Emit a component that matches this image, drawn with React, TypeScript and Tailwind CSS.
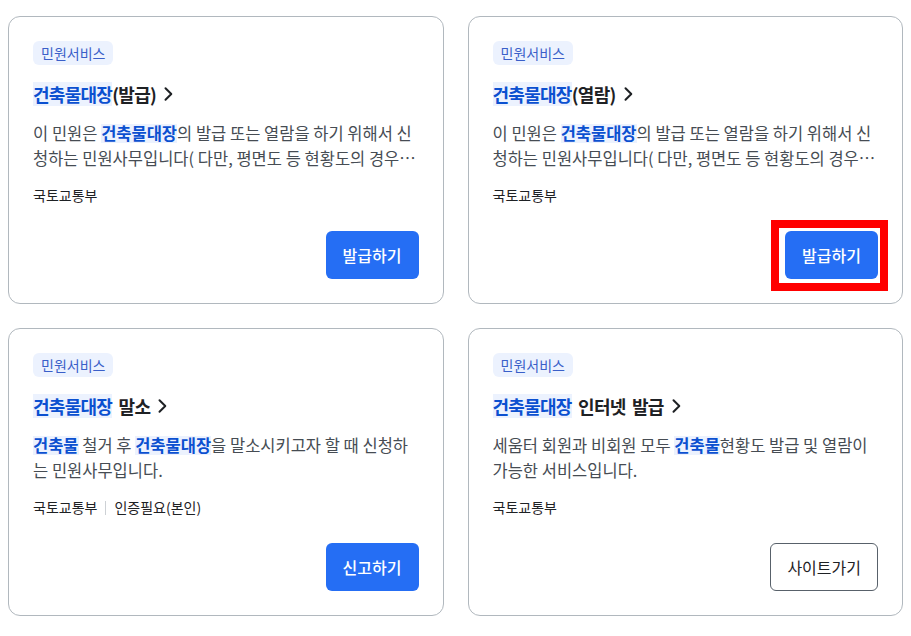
import React from 'react';

type Part = { text: string; hl?: boolean };

interface Service {
  titleHl: string;
  titleRest: string;
  desc: Part[];
  tags: string[];
  action: string;
  outline?: boolean;
  marked?: boolean;
}

const services: Service[] = [
  {
    titleHl: '건축물대장',
    titleRest: '(발급)',
    desc: [
      { text: '이 민원은 ' },
      { text: '건축물대장', hl: true },
      { text: '의 발급 또는 열람을 하기 위해서 신청하는 민원사무입니다( 다만, 평면도 등 현황도의 경우 건축물 소유자만 발급 가능합니다)' },
    ],
    tags: ['국토교통부'],
    action: '발급하기',
  },
  {
    titleHl: '건축물대장',
    titleRest: '(열람)',
    desc: [
      { text: '이 민원은 ' },
      { text: '건축물대장', hl: true },
      { text: '의 발급 또는 열람을 하기 위해서 신청하는 민원사무입니다( 다만, 평면도 등 현황도의 경우 건축물 소유자만 발급 가능합니다)' },
    ],
    tags: ['국토교통부'],
    action: '발급하기',
    marked: true,
  },
  {
    titleHl: '건축물대장',
    titleRest: ' 말소',
    desc: [
      { text: '건축물', hl: true },
      { text: ' 철거 후 ' },
      { text: '건축물대장', hl: true },
      { text: '을 말소시키고자 할 때 신청하는 민원사무입니다.' },
    ],
    tags: ['국토교통부', '인증필요(본인)'],
    action: '신고하기',
  },
  {
    titleHl: '건축물대장',
    titleRest: ' 인터넷 발급',
    desc: [
      { text: '세움터 회원과 비회원 모두 ' },
      { text: '건축물', hl: true },
      { text: '현황도 발급 및 열람이 가능한 서비스입니다.' },
    ],
    tags: ['국토교통부'],
    action: '사이트가기',
    outline: true,
  },
];

function ChevronRight() {
  return (
    <svg width="20" height="20" viewBox="0 0 20 20" fill="none" className="shrink-0">
      <path d="M7.5 4.2L13.3 10L7.5 15.8" stroke="#1e2124" strokeWidth="2" strokeLinecap="round" strokeLinejoin="round" />
    </svg>
  );
}

function ServiceCard({ item }: { item: Service }) {
  return (
    <div className="flex flex-col rounded-xl border border-[#b1b8be] bg-white px-6 pt-6 pb-6">
      <div className="flex">
        <span className="block h-6 rounded-md bg-[#ecf2fe] px-2 text-[14px] leading-6 text-[#3a5fc9]">
          민원서비스
        </span>
      </div>

      <div className="mt-4 flex h-[26px] items-center text-[18px] font-bold leading-[26px] tracking-[-0.04em] [word-spacing:3px] text-[#1e2124]">
        <span className="block h-6 bg-[#ecf2fe] leading-6 text-[#0b50d0]">{item.titleHl}</span>
        <span className="whitespace-pre">{item.titleRest}</span>
        <span className="ml-0.5">
          <ChevronRight />
        </span>
      </div>

      <p className="mt-[14px] line-clamp-2 text-[16.5px] leading-[25px] text-[#464c53]">
        {item.desc.map((p, i) =>
          p.hl ? (
            <span key={i} className="inline-block h-[19px] bg-[#ecf2fe] font-bold leading-[19px] text-[#0b50d0]">
              {p.text}
            </span>
          ) : (
            <span key={i}>{p.text}</span>
          )
        )}
      </p>

      <div className="mt-[14px] flex h-[21px] items-center text-[14px] leading-[21px] text-[#1e2124]">
        {item.tags.map((t, i) => (
          <React.Fragment key={t}>
            {i > 0 && <span className="mx-2 h-[14px] w-px bg-[#cdd1d5]" />}
            <span>{t}</span>
          </React.Fragment>
        ))}
      </div>

      <div className="mt-auto flex justify-end pt-[25px]">
        <div className="relative">
          {item.marked && (
            <div className="absolute -left-[14px] -top-[11px] -right-[10px] -bottom-[12px] border-8 border-[#ff0000]" />
          )}
          {item.outline ? (
            <button className="relative block h-12 rounded-md border border-[#58616a] bg-white px-4 text-[16px] text-[#1e2124]">
              {item.action}
            </button>
          ) : (
            <button className="relative block h-12 rounded-md bg-[#256ef4] px-[17px] text-[16px] font-medium text-white">
              {item.action}
            </button>
          )}
        </div>
      </div>
    </div>
  );
}

export default function App() {
  return (
    <div
      className="min-h-screen bg-white px-2 pt-4"
      style={{ fontFamily: '"Noto Sans CJK KR", "Noto Sans", sans-serif' }}
    >
      <div className="grid grid-cols-2 gap-6">
        {services.map((s, i) => (
          <ServiceCard key={i} item={s} />
        ))}
      </div>
    </div>
  );
}
